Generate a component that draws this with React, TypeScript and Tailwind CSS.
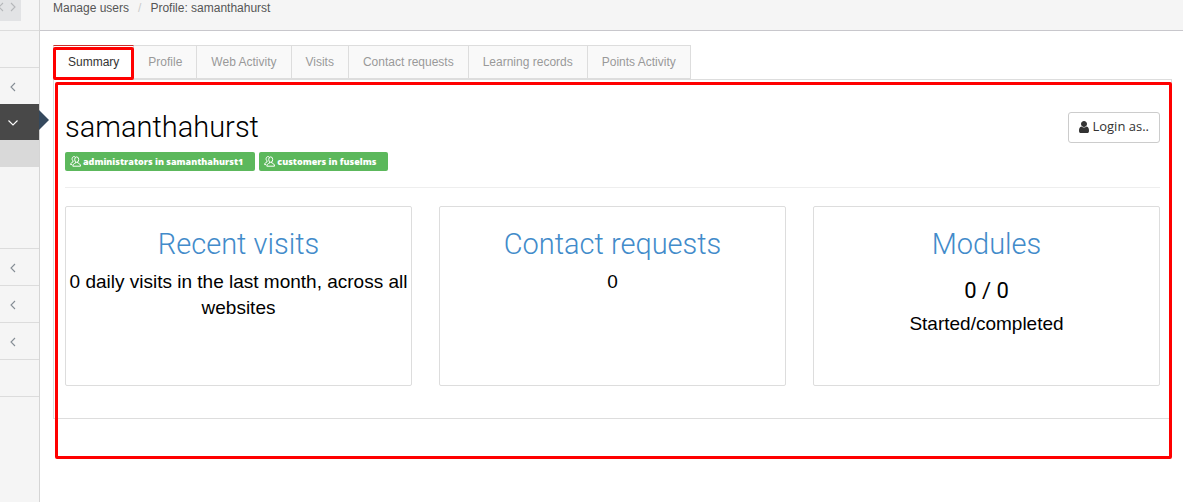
import React from "react";

const TABS = [
  "Summary",
  "Profile",
  "Web Activity",
  "Visits",
  "Contact requests",
  "Learning records",
  "Points Activity",
];

function Chevron({ d, className }: { d: string; className?: string }) {
  return (
    <svg viewBox="0 0 10 10" className={`size-2.5 shrink-0 ${className ?? ""}`} fill="none" stroke="currentColor" strokeWidth="1.1" aria-hidden="true">
      <path d={d} />
    </svg>
  );
}

const LEFT = "M7 1 3 5 7 9";
const RIGHT = "M3 1 7 5 3 9";
const DOWN = "M.5 3.5 5 8 9.5 3.5";

function CollapsedItem({ label }: { label: string }) {
  return (
    <button type="button" aria-label={label} className="flex h-[37px] w-full items-center border-b border-[#dcdcdc] pt-px pl-2 text-[#858d95]">
      <Chevron d={LEFT} />
    </button>
  );
}

function Sidebar() {
  return (
    <nav aria-label="Main" className="w-10 shrink-0 border-r border-[#d5d5d5] bg-[#f5f5f5]">
      <div className="h-[31px] border-b border-[#dcdcdc]">
        <button type="button" aria-label="Resize menu" className="flex h-[21px] w-[21px] items-start bg-[#e2e3e5] pt-0.5 text-[#b5b7ba]">
          <Chevron d={LEFT} className="-ml-1" />
          <Chevron d={RIGHT} className="ml-0.5" />
        </button>
      </div>
      <div className="h-[37px] border-b border-[#dcdcdc]" />
      <button type="button" aria-label="Expand content" className="flex h-9 w-full items-center pt-px pl-2 text-[#858d95]">
        <Chevron d={LEFT} />
      </button>
      <div className="relative">
        <button type="button" aria-label="Collapse users" className="flex h-9 w-full items-center bg-[#484848] pl-2 text-white">
          <Chevron d={DOWN} />
        </button>
        <svg viewBox="0 0 10 20" className="absolute top-1.5 left-full h-5 w-2.5" aria-hidden="true">
          <path d="M0 0 10 10 0 20Z" fill="#35495d" />
        </svg>
      </div>
      <div className="h-[27px] bg-[#d9d9d9]" />
      <div className="h-[82px] border-b border-[#dcdcdc]" />
      <CollapsedItem label="Expand modules" />
      <CollapsedItem label="Expand reports" />
      <CollapsedItem label="Expand settings" />
      <div className="h-[37px] border-b border-[#dcdcdc]" />
    </nav>
  );
}

function GroupBadge({ children }: { children: React.ReactNode }) {
  return (
    <span className="flex h-[19px] items-center rounded-xs bg-[#5cb85c] pr-3 pl-[5px] text-[9px] font-extrabold whitespace-nowrap text-white">
      <svg viewBox="0 0 11 11" className="mr-0.5 size-[11px] shrink-0" fill="none" stroke="currentColor" strokeWidth="1" aria-hidden="true">
        <path d="M3.6 5.2C2.2 4.6 2 3.600 2.100 2.600 2.200 1.300 3 .6 4 .6c.6 0 1 .1 1.300.5M2.800 5.200v1C1.400 6.700.6 7.200.6 8.600h1.500" />
        <ellipse cx="6.7" cy="3.6" rx="2" ry="2.7" />
        <path d="M5.700 6v1C4.200 7.500 2.800 8 2.800 10.200h7.700C10.500 8 9.200 7.500 7.700 7V6" />
      </svg>
      {children}
    </span>
  );
}

function Card({ title, children }: { title: string; children: React.ReactNode }) {
  return (
    <section className="min-h-[180px] rounded-xs border border-[#dddddd] px-0.5 pt-[21px] text-center text-[19px] text-black">
      <h2 className="font-[Roboto,sans-serif] text-[29px] leading-[33px] font-light text-[#428bca]">
        <a href="#details">{title}</a>
      </h2>
      {children}
    </section>
  );
}

export default function App() {
  return (
    <div className="flex min-h-screen bg-white font-['Liberation_Sans',Arial,sans-serif] text-xs text-[#555555]">
      <Sidebar />
      <div className="min-w-0 flex-1">
        <header className="h-[31px] border-b border-[#c8c7cc] bg-[#f5f5f5] pl-[13px]">
          <ol className="flex leading-4">
            <li><a href="#users">Manage users</a></li>
            <li className="px-[9px] text-[#cccccc]" aria-hidden="true">/</li>
            <li>Profile: samanthahurst</li>
          </ol>
        </header>
        <main className="pt-3.5 pr-[11px] pl-[13px]">
          <div role="tablist" className="flex">
            {TABS.map((tab, i) => (
              <div key={tab} className="relative">
                <button
                  type="button"
                  role="tab"
                  aria-selected={i === 0}
                  className={
                    i === 0
                      ? "h-[34px] border border-[#dddddd] border-t-[#c9302c] border-b-white bg-white px-3.5 text-[#333333]"
                      : "h-[34px] border border-l-0 border-[#dddddd] bg-[#f9f9f9] px-3.5 text-[#999999]"
                  }
                >
                  {tab}
                </button>
                {i === 0 && <div className="pointer-events-none absolute inset-x-0 top-0.5 -bottom-px z-10 rounded-xs border-3 border-[#ff0000]" />}
              </div>
            ))}
          </div>
          <div className="relative border border-[#dddddd] px-[11px] pb-8">
            <div className="flex items-start justify-between border-b border-[#eeeeee] pt-8 pb-4">
              <div>
                <h1 className="-mt-px font-[Roboto,sans-serif] text-[29px] leading-[33px] font-light text-black">samanthahurst</h1>
                <div className="mt-2 flex gap-1 font-['Open_Sans',sans-serif]">
                  <GroupBadge>administrators in samanthahurst1</GroupBadge>
                  <GroupBadge>customers in fuselms</GroupBadge>
                </div>
              </div>
              <button type="button" className="flex h-[31px] items-center gap-[3px] rounded-[3px] border border-[#cccccc] bg-white px-2.5 pb-0.5 font-['Open_Sans',sans-serif] text-[13px] text-[#333333]">
                <svg viewBox="0 0 1280 1536" className="h-3 w-2.5" fill="currentColor" aria-hidden="true">
                  <path d="M1280 1271c0 146-96 265-213 265H213C96 1536 0 1417 0 1271c0-262 65-567 327-567 81 79 191 128 313 128s232-49 313-128c262 0 327 305 327 567ZM1024 384c0 212-172 384-384 384S256 596 256 384 428 0 640 0s384 172 384 384Z" />
                </svg>
                Login as..
              </button>
            </div>
            <div className="mt-[18px] grid grid-cols-3 gap-[27px]">
              <Card title="Recent visits">
                <p className="mt-2 leading-[26px]">0 daily visits in the last month, across all websites</p>
              </Card>
              <Card title="Contact requests">
                <p className="mt-2 leading-[26px]">0</p>
              </Card>
              <Card title="Modules">
                <p className="mt-[17px] font-[Roboto,sans-serif] text-[22px] leading-[26px]">0 / 0</p>
                <p className="mt-[7px] leading-[26px]">Started/completed</p>
              </Card>
            </div>
            <div className="pointer-events-none absolute top-0.5 -right-px -bottom-[41px] left-px z-10 rounded-xs border-3 border-[#ff0000]" />
          </div>
        </main>
      </div>
    </div>
  );
}
